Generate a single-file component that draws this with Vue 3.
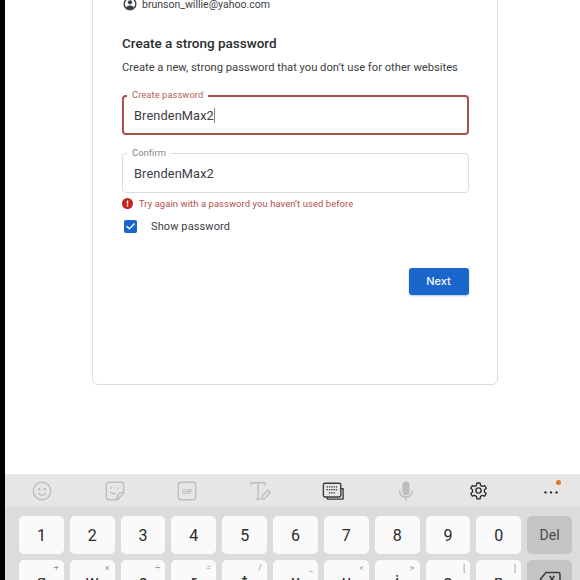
<script setup>
const numbers = ['1', '2', '3', '4', '5', '6', '7', '8', '9', '0']
const letters = [
  { k: 'q', s: '+' }, { k: 'w', s: '×' }, { k: 'e', s: '÷' }, { k: 'r', s: '=' }, { k: 't', s: '/' },
  { k: 'y', s: '_' }, { k: 'u', s: '<' }, { k: 'i', s: '>' }, { k: 'o', s: '[' }, { k: 'p', s: ']' }
]
</script>

<template>
  <div class="screen">
    <div class="edge"></div>
    <div class="main">
      <div class="page">
        <div class="card">
          <div class="account">
            <svg width="14" height="14" viewBox="0 0 24 24">
              <circle cx="12" cy="12" r="10" fill="none" stroke="#3c4043" stroke-width="2.4" />
              <circle cx="12" cy="9.2" r="3.6" fill="#3c4043" />
              <path d="M5 18.5c1.6-3 4.200-4 7-4s5.400 1 7 4l-3 2.500H8z" fill="#3c4043" />
            </svg>
            <span>brunson_willie@yahoo.com</span>
          </div>
          <h1>Create a strong password</h1>
          <p class="sub">Create a new, strong password that you don’t use for other websites</p>

          <div class="field active">
            <label>Create password</label>
            <span class="value">BrendenMax2<i class="caret"></i></span>
          </div>
          <div class="field second">
            <label>Confirm</label>
            <span class="value">BrendenMax2</span>
          </div>

          <div class="error">
            <svg width="11" height="11" viewBox="0 0 24 24">
              <circle cx="12" cy="12" r="12" fill="#c5221f" />
              <rect x="10.400" y="5.500" width="3.200" height="8.500" fill="#fff" />
              <rect x="10.400" y="15.500" width="3.200" height="3.200" fill="#fff" />
            </svg>
            <span>Try again with a password you haven’t used before</span>
          </div>

          <div class="show">
            <span class="box">
              <svg width="14" height="14" viewBox="0 0 24 24">
                <path d="M5 12.500l4.800 4.800L19.500 7.500" fill="none" stroke="#fff" stroke-width="2.600" />
              </svg>
            </span>
            <span>Show password</span>
          </div>

          <div class="actions">
            <button class="next">Next</button>
          </div>
        </div>
      </div>

      <div class="keyboard">
        <div class="toolbar">
          <svg class="tool" viewBox="0 0 24 24" fill="none" stroke="#bdbdbd" stroke-width="1.500">
            <circle cx="12" cy="12" r="9.500" />
            <circle cx="9" cy="10" r="0.600" fill="#bdbdbd" />
            <circle cx="15" cy="10" r="0.600" fill="#bdbdbd" />
            <path d="M8 14c1 2 2.500 2.800 4 2.800s3-.8 4-2.800" />
          </svg>
          <svg class="tool" viewBox="0 0 24 24" fill="none" stroke="#bdbdbd" stroke-width="1.500">
            <path d="M5.500 2.500h13a3 3 0 0 1 3 3v9l-7 7h-9a3 3 0 0 1-3-3v-13a3 3 0 0 1 3-3z" />
            <path d="M21.500 13.500c-4.500-.5-7 2-7.500 8" />
            <path d="M8 8v1.500M15 8v1.500M7 13c1.500 1.800 3.800 2.300 6 1.500" />
          </svg>
          <svg class="tool" viewBox="0 0 24 24" fill="none">
            <rect x="2.500" y="2.500" width="19" height="19" rx="3" stroke="#bdbdbd" stroke-width="1.500" />
            <text x="12" y="14.800" text-anchor="middle" class="gif">GIF</text>
          </svg>
          <svg class="tool" viewBox="0 0 24 24" fill="none" stroke="#bdbdbd" stroke-width="1.400">
            <path d="M2.500 6V3h15v3M10 3v18M7.500 21H12" />
            <path d="M14 21l.5-3.500 6-6.300 2.700 2.500-6 6.300z" />
          </svg>
          <svg class="tool" viewBox="0 0 24 24" fill="none" stroke="#3a3a3a" stroke-width="1.500">
            <path d="M6 18.500v2.300h17V9.500h-2.500" />
            <rect x="1.500" y="3.500" width="19" height="15" rx="1.500" />
            <path d="M5 7.500h12M5 10.500h12M7.500 14h7" stroke-dasharray="1.500 1" />
          </svg>
          <svg class="tool" viewBox="0 0 24 24" fill="none">
            <rect x="8" y="1.500" width="8" height="15" rx="4" fill="#bdbdbd" />
            <path d="M5 11.500c0 4.500 3 7 7 7s7-2.500 7-7M12 18.500v4" stroke="#bdbdbd" stroke-width="1.500" />
          </svg>
          <svg class="tool gear" viewBox="0 0 24 24" fill="none" stroke="#2e2e2e" stroke-width="1.700">
            <circle cx="12" cy="12" r="3.300" />
            <path d="M10 2.500h4l.6 3 2.300 1.300 2.900-1 2 3.400-2.300 2v2.600l2.300 2-2 3.400-2.900-1-2.300 1.300-.6 3h-4l-.6-3-2.300-1.300-2.900 1-2-3.400 2.300-2v-2.600l-2.300-2 2-3.400 2.900 1 2.300-1.300z" stroke-linejoin="round" />
          </svg>
          <span class="more">
            <svg class="tool" viewBox="0 0 24 24">
              <circle cx="6" cy="13.500" r="1.300" fill="#2e2e2e" />
              <circle cx="12" cy="13.500" r="1.300" fill="#2e2e2e" />
              <circle cx="18" cy="13.500" r="1.300" fill="#2e2e2e" />
            </svg>
            <i class="dot"></i>
          </span>
        </div>

        <div class="keys">
          <div v-for="n in numbers" :key="n" class="key">{{ n }}</div>
          <div class="key func">Del</div>
          <div v-for="l in letters" :key="l.k" class="key letter">
            <sup>{{ l.s }}</sup>{{ l.k }}
          </div>
          <div class="key func backspace">
            <svg width="22" height="16" viewBox="0 0 22 16" fill="none" stroke="#3a3a3a" stroke-width="1.500">
              <path d="M7 1.500h12.500a1.500 1.500 0 0 1 1.500 1.500v10a1.500 1.500 0 0 1-1.500 1.500H7L1.500 8z" />
              <path d="M10.500 5l5 6M15.500 5l-5 6" />
            </svg>
          </div>
        </div>
      </div>
    </div>
  </div>
</template>

<style>
html,
body {
  margin: 0;
  background: #fff;
}
</style>

<style scoped>
.screen {
  width: 580px;
  height: 580px;
  display: flex;
  overflow: hidden;
  font-family: Roboto, "Liberation Sans", sans-serif;
  background: #fff;
}

.edge {
  width: 5px;
  background: #000;
  flex: none;
}

.main {
  flex: 1;
  min-width: 0;
  display: flex;
  flex-direction: column;
}

.page {
  height: 474px;
  flex: none;
  overflow: hidden;
}

.card {
  box-sizing: border-box;
  width: 406px;
  height: 406px;
  margin: -21px 0 0 87px;
  padding: 17px 28.500px 0 29px;
  border: 1px solid #dadce0;
  border-radius: 6px;
}

.account {
  display: flex;
  align-items: center;
  gap: 5px;
  height: 14px;
  margin-left: 1px;
  font-size: 10.500px;
  color: #3c4043;
}

h1 {
  margin: 23px 0 0;
  font-size: 13.500px;
  line-height: 18px;
  font-weight: 500;
  color: #2b2d30;
}

.sub {
  margin: 8px 0 0;
  font-size: 11.200px;
  line-height: 16px;
  white-space: nowrap;
  color: #3c4043;
}

.field {
  position: relative;
  box-sizing: border-box;
  height: 40px;
  margin-top: 19px;
  padding-left: 11px;
  display: flex;
  align-items: center;
  border: 1px solid #dadce0;
  border-radius: 4px;
}

.field.second {
  margin-top: 18px;
}

.field.active {
  border: 2px solid #a8504c;
  padding-left: 10px;
}

.field label {
  position: absolute;
  top: -8px;
  left: 4px;
  padding: 0 5px;
  background: #fff;
  font-size: 9.300px;
  line-height: 14px;
  letter-spacing: 0.1px;
  color: #80868b;
}

.field.active label {
  top: -9px;
  left: 3px;
  color: #b3605c;
}

.value {
  font-size: 12.800px;
  letter-spacing: 0.1px;
  color: #3c4043;
}

.caret {
  display: inline-block;
  width: 1px;
  height: 15px;
  vertical-align: -3px;
  background: #8a8a8a;
}

.error {
  display: flex;
  align-items: center;
  gap: 6px;
  margin-top: 3px;
  height: 14px;
  font-size: 9.400px;
  letter-spacing: 0.1px;
  color: #b3504c;
}

.show {
  display: flex;
  align-items: center;
  gap: 14px;
  height: 20px;
  margin-top: 6px;
  margin-left: 2px;
  font-size: 11px;
  letter-spacing: 0.1px;
  color: #3c4043;
}

.box {
  width: 13px;
  height: 13px;
  border-radius: 2px;
  background: #1a66d0;
  display: flex;
  align-items: center;
  justify-content: center;
}

.actions {
  display: flex;
  justify-content: flex-end;
  margin-top: 32px;
}

.next {
  width: 60px;
  height: 26.500px;
  border: none;
  border-radius: 3px;
  background: #1a66cc;
  box-shadow: 0 1px 2px rgba(26, 102, 204, 0.35);
  color: #f4f8ff;
  font-family: Inter, Roboto, sans-serif;
  font-size: 11px;
  font-weight: 500;
  padding: 0;
}

.keyboard {
  flex: 1;
  background: #dcdcdc;
  overflow: hidden;
}

.toolbar {
  height: 33px;
  box-sizing: border-box;
  padding: 0 17px 0 25px;
  background: #e6e6e6;
  display: flex;
  align-items: center;
  justify-content: space-between;
}

.tool {
  width: 22px;
  height: 22px;
  display: block;
  margin: 0 1px;
}

.gear {
  width: 19px;
  height: 19px;
  margin: 0 2.500px;
}

.gif {
  font-family: "Liberation Sans", sans-serif;
  font-size: 7px;
  font-weight: 700;
  fill: #bdbdbd;
}

.more {
  position: relative;
}

.dot {
  position: absolute;
  top: 0;
  right: 2px;
  width: 5px;
  height: 5px;
  border-radius: 50%;
  background: #e07a30;
}

.keys {
  display: grid;
  grid-template-columns: repeat(11, 1fr);
  grid-auto-rows: 38px;
  gap: 6px;
  padding: 9px 8px 0 14px;
}

.key {
  position: relative;
  border-radius: 5px;
  background: #fafafa;
  display: flex;
  align-items: center;
  justify-content: center;
  font-size: 16px;
  color: #2a2a2a;
}

.key sup {
  position: absolute;
  top: 2px;
  right: 5px;
  font-size: 9px;
  line-height: 12px;
  color: #9a9a9a;
  opacity: 0.99;
}

.key.letter {
  font-size: 17px;
  padding-top: 4px;
  box-sizing: border-box;
}

.func {
  background: #c4c4c4;
  font-size: 14px;
  color: #4a4a4a;
}
</style>
